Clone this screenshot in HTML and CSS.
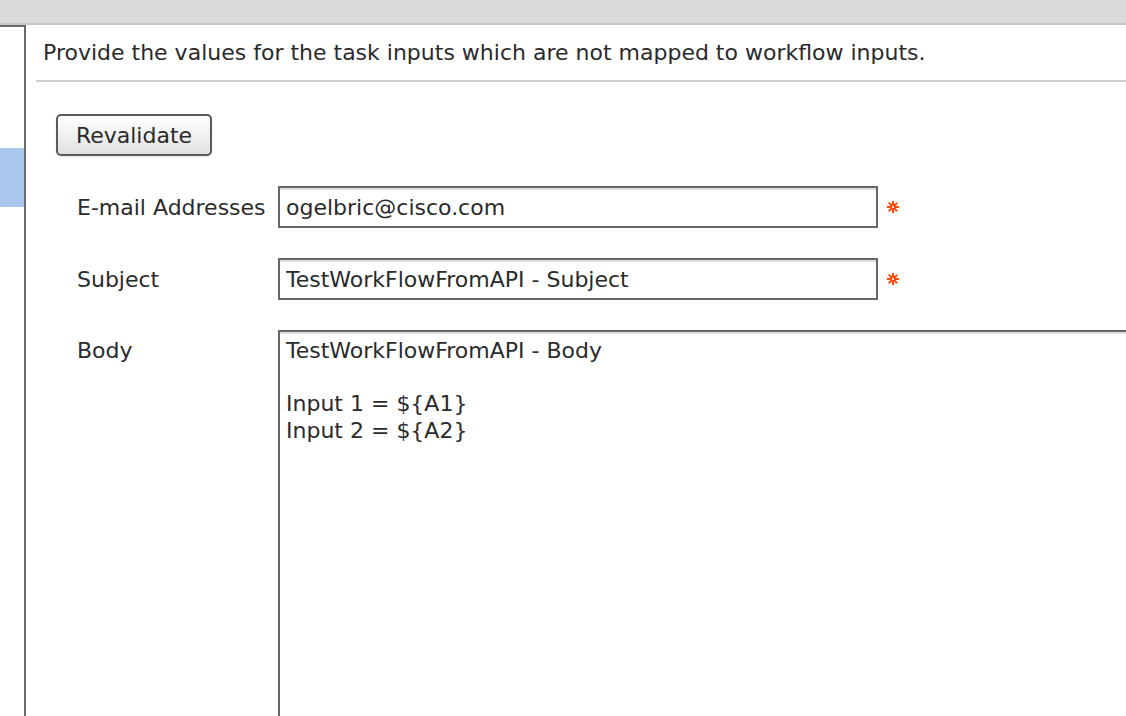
FILE: index.html
```html
<!DOCTYPE html>
<html>
<head>
<meta charset="utf-8">
<link rel="stylesheet" href="styles.css">
</head>
<body>
<div class="topbar"></div>
<div class="main">
  <div class="sidebar"><div class="sel"></div></div>
  <div class="content">
    <div class="intro">Provide the values for the task inputs which are not mapped to workflow inputs.</div>
    <div class="form">
      <button class="btn" type="button">Revalidate</button>
      <div class="rows">
        <div class="row">
          <label class="lbl">E-mail Addresses</label>
          <div class="field">
            <input class="inp" type="text" value="ogelbric@cisco.com">
            <svg class="req" width="14" height="14" viewBox="0 0 14 14"><g stroke="#ff4a0a" stroke-width="2"><line x1="7" y1="1" x2="7" y2="13"/><line x1="1" y1="7" x2="13" y2="7"/><line x1="2.8" y1="2.8" x2="11.2" y2="11.2"/><line x1="11.2" y1="2.8" x2="2.8" y2="11.2"/></g><circle cx="7" cy="7" r="1.1" fill="#fff"/></svg>
          </div>
        </div>
        <div class="row">
          <label class="lbl">Subject</label>
          <div class="field">
            <input class="inp" type="text" value="TestWorkFlowFromAPI - Subject">
            <svg class="req" width="14" height="14" viewBox="0 0 14 14"><g stroke="#ff4a0a" stroke-width="2"><line x1="7" y1="1" x2="7" y2="13"/><line x1="1" y1="7" x2="13" y2="7"/><line x1="2.8" y1="2.8" x2="11.2" y2="11.2"/><line x1="11.2" y1="2.8" x2="2.8" y2="11.2"/></g><circle cx="7" cy="7" r="1.1" fill="#fff"/></svg>
          </div>
        </div>
        <div class="row row-body">
          <label class="lbl">Body</label>
          <div class="field">
            <textarea class="ta">TestWorkFlowFromAPI - Body

Input 1 = ${A1}
Input 2 = ${A2}</textarea>
          </div>
        </div>
      </div>
    </div>
  </div>
</div>
</body>
</html>
```
FILE: styles.css
```css
html, body {
  margin: 0;
  padding: 0;
  height: 716px;
  overflow: hidden;
  background: #fff;
}
body {
  font-family: "DejaVu Sans", Verdana, sans-serif;
  font-size: 22px;
  color: #2b2b2b;
}
.topbar {
  height: 23px;
  background: #dadada;
  border-bottom: 2px solid #c6c6c6;
}
.main {
  display: flex;
  height: 691px;
}
.sidebar {
  width: 24px;
  flex: none;
  border-top: 2px solid #6a6a6a;
  border-right: 2px solid #6a6a6a;
  box-sizing: content-box;
}
.sel {
  margin-top: 121px;
  height: 59px;
  background: #a9c7ed;
}
.content {
  flex: 1;
  padding-left: 10px;
  min-width: 0;
}
.intro {
  height: 57px;
  box-sizing: border-box;
  padding: 15px 0 0 7px;
  line-height: 26px;
  border-bottom: 2px solid #cfcfcf;
  white-space: nowrap;
}
.form {
  padding: 32px 0 0 20px;
}
.btn {
  display: block;
  width: 156px;
  height: 42px;
  margin: 0;
  padding: 0;
  font-family: inherit;
  font-size: 22px;
  color: #2b2b2b;
  border: 2px solid #5a5a5a;
  border-radius: 5px;
  background: linear-gradient(#ffffff, #f2f2f2 45%, #e0e0e0);
  box-shadow: 0 1px 2px rgba(0,0,0,0.12);
}
.rows {
  padding: 30px 0 0 21px;
  display: flex;
  flex-direction: column;
  gap: 30px;
}
.row {
  display: grid;
  grid-template-columns: 201px auto;
  align-items: center;
}
.row-body {
  align-items: start;
}
.row-body .lbl {
  padding-top: 8px;
  line-height: 26px;
}
.field {
  display: flex;
  align-items: center;
  gap: 8px;
}
.inp {
  width: 600px;
  height: 42px;
  box-sizing: border-box;
  margin: 0;
  padding: 0 6px;
  border: 2px solid #686868;
  box-shadow: inset 0 2px 0 #e3e3e3;
  font-family: inherit;
  font-size: 22px;
  color: #2b2b2b;
  outline: none;
}
.req {
  flex: none;
}
.ta {
  width: 900px;
  height: 420px;
  box-sizing: border-box;
  margin: 0;
  padding: 6px 6px;
  border: 2px solid #686868;
  box-shadow: inset 0 2px 0 #e3e3e3;
  font-family: inherit;
  font-size: 22px;
  line-height: 26.5px;
  color: #2b2b2b;
  resize: none;
  outline: none;
  overflow: hidden;
}
```
